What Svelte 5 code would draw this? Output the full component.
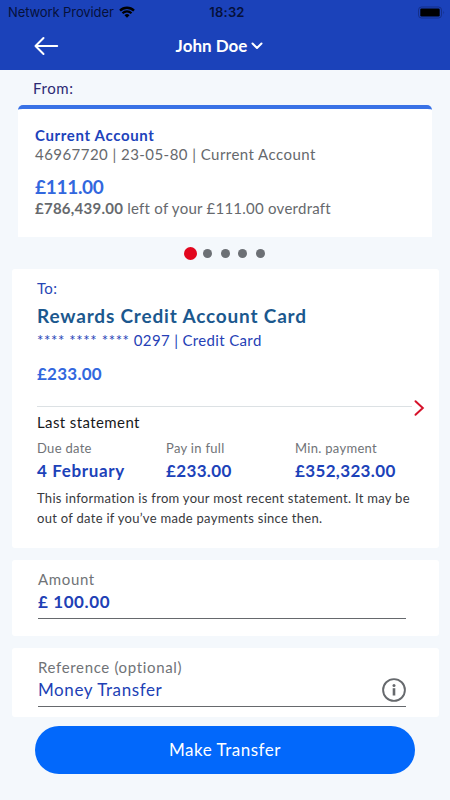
<script lang="ts">
    const profile = 'John Doe';

    const from = {
        name: 'Current Account',
        details: '46967720 | 23-05-80 | Current Account',
        balance: '£111.00',
        available: '£786,439.00',
        overdraft: '£111.00'
    };

    const to = {
        name: 'Rewards Credit Account Card',
        mask: '**** **** ****',
        number: '0297',
        type: 'Credit Card',
        balance: '£233.00'
    };

    const statement = [
        { label: 'Due date', value: '4 February' },
        { label: 'Pay in full', value: '£233.00' },
        { label: 'Min. payment', value: '£352,323.00' }
    ];

    const accounts = 5;
    let selected = $state(0);
    let reference = $state('Money Transfer');
    let amount = $state('£ 100.00');
</script>

<div class="screen">
    <header>
        <div class="status">
            <div class="provider">
                <span>Network Provider</span>
                <svg width="16" height="12" viewBox="0 0 16 12" fill="none" stroke="#000" stroke-width="2.3">
                    <path d="M1 4.6a10 10 0 0 1 14 0" />
                    <path d="M3.5 7.3a6.4 6.4 0 0 1 9 0" />
                    <path d="M8 11.8 5.5 9.3a3.6 3.6 0 0 1 5 0z" fill="#000" stroke="none" />
                </svg>
            </div>
            <span class="time">18:32</span>
            <svg class="battery" width="28" height="13" viewBox="0 0 28 13">
                <rect x="0.5" y="1" width="23" height="11" rx="3" fill="none" stroke="#142f8a" />
                <rect x="2.3" y="2.5" width="19.4" height="8" rx="1.2" />
                <path d="M25.4 4.7q1.6 1.8 0 3.6z" fill="#142f8a" />
            </svg>
        </div>
        <nav>
            <button class="back" aria-label="Back">
                <svg width="26" height="20" viewBox="0 0 26 20" fill="none" stroke="#fff" stroke-width="2" stroke-linecap="round" stroke-linejoin="round">
                    <path d="M23.2 10H1.5M9.5 2 1.5 10l8 8" />
                </svg>
            </button>
            <button class="profile">
                <span>{profile}</span>
                <svg width="12" height="8" viewBox="0 0 12 8" fill="none" stroke="#fff" stroke-width="2" stroke-linecap="round" stroke-linejoin="round">
                    <path d="M1.5 1.5 6 6l4.5-4.5" />
                </svg>
            </button>
        </nav>
    </header>

    <main>
        <div class="from-label">From:</div>

        <section class="account">
            <div class="account-name">{from.name}</div>
            <div class="account-details">{from.details}</div>
            <div class="account-balance">{from.balance}</div>
            <div class="overdraft"><b>{from.available}</b> left of your {from.overdraft} overdraft</div>
        </section>

        <div class="dots">
            {#each Array(accounts) as _, i}
                <button class:active={i === selected} aria-label="Account {i + 1}" onclick={() => selected = i}></button>
            {/each}
        </div>

        <section class="panel payee">
            <div class="to-label">To:</div>
            <h2>{to.name}</h2>
            <div class="card-number"><span class="mask">{to.mask}</span> {to.number} | {to.type}</div>
            <div class="card-balance">{to.balance}</div>
            <div class="divider">
                <hr>
                <svg width="12" height="18" viewBox="0 0 12 18" fill="none" stroke="#d6122a" stroke-width="2" stroke-linecap="round">
                    <path d="M1.5 2.2 8.8 9l-7.3 6.8" />
                </svg>
            </div>
            <h3>Last statement</h3>
            <dl>
                {#each statement as item}
                    <div>
                        <dt>{item.label}</dt>
                        <dd>{item.value}</dd>
                    </div>
                {/each}
            </dl>
            <p>
                This information is from your most recent statement. It may be<br>
                out of date if you’ve made payments since then.
            </p>
        </section>

        <section class="panel amount">
            <label for="amount">Amount</label>
            <div class="field">
                <input id="amount" bind:value={amount}>
            </div>
        </section>

        <section class="panel reference">
            <label for="reference">Reference (optional)</label>
            <div class="field">
                <input id="reference" bind:value={reference}>
                <svg width="24" height="24" viewBox="0 0 24 24" fill="none" stroke="#66696d">
                    <circle cx="12" cy="12" r="10.9" stroke-width="1.9" />
                    <path d="M12 10.2v7.3" stroke-width="2.6" />
                    <circle cx="12" cy="7.5" r="1.5" fill="#66696d" stroke="none" />
                </svg>
            </div>
        </section>
    </main>

    <button class="submit">Make Transfer</button>
</div>

<style>
    :global(body) {
        background: #f4f8fc;
    }

    .screen {
        width: 450px;
        height: 800px;
        overflow: hidden;
        display: flex;
        flex-direction: column;
        background: #f4f8fc;
        font-family: Lato, "Noto Sans", sans-serif;
        white-space: nowrap;
    }

    button {
        padding: 0;
        border: none;
        background: none;
        font-family: inherit;
    }

    svg {
        display: block;
        flex: none;
    }

    header {
        height: 70px;
        flex: none;
        background: #1b42ba;
    }

    .status {
        height: 24px;
        padding: 0 4px 0 8px;
        display: grid;
        grid-template-columns: 1fr auto 1fr;
        align-items: center;
        color: #06113a;
        font-family: Inter, sans-serif;
        font-size: 13px;
    }

    .provider {
        display: flex;
        align-items: center;
        gap: 5px;
        letter-spacing: -0.1px;
    }

    .time {
        font-weight: 600;
        letter-spacing: 0.2px;
    }

    .battery {
        justify-self: end;
    }

    nav {
        height: 44px;
        padding: 0 34px;
        display: grid;
        grid-template-columns: 1fr auto 1fr;
        align-items: center;
    }

    .profile {
        display: flex;
        align-items: center;
        gap: 4px;
        padding-right: 11px;
        color: #fff;
        font-size: 17px;
        font-weight: 700;
        line-height: 24px;
    }

    main {
        height: 647px;
        flex: none;
        overflow: hidden;
    }

    .from-label {
        height: 35px;
        box-sizing: border-box;
        padding: 6px 0 0 33px;
        line-height: 25px;
        font-size: 15px;
        letter-spacing: 0.6px;
        color: #2c2a74;
    }

    .account {
        height: 132px;
        box-sizing: border-box;
        margin: 0 18px;
        padding: 16px 17px 0;
        border-top: 4px solid #3972e6;
        border-radius: 5px 5px 0 0;
        background: #fff;
        color: #66696d;
    }

    .account-name {
        line-height: 20px;
        font-size: 15px;
        font-weight: 700;
        color: #1d43bb;
        letter-spacing: 0.65px;
    }

    .account-details {
        line-height: 18px;
        font-size: 15px;
        letter-spacing: 0.45px;
    }

    .account-balance {
        margin-top: 12px;
        line-height: 24px;
        font-size: 19px;
        font-weight: 700;
        letter-spacing: -0.3px;
        color: #3267de;
    }

    .overdraft {
        line-height: 19px;
        font-size: 15px;
        letter-spacing: 0.25px;
    }

    .dots {
        height: 32px;
        padding-right: 2px;
        display: flex;
        align-items: center;
        justify-content: center;
        gap: 8.5px;
    }

    .dots button {
        width: 9px;
        height: 9px;
        border-radius: 50%;
        background: #6c7075;
    }

    .dots .active {
        width: 13px;
        height: 13px;
        margin-right: -2px;
        background: #e2061e;
    }

    .panel {
        box-sizing: border-box;
        margin: 0 11px 0 12px;
        background: #fff;
        border-radius: 3px;
    }

    .payee {
        height: 279px;
        margin-bottom: 12px;
        padding: 9px 13px 0 25px;
    }

    .to-label {
        line-height: 20px;
        font-size: 15px;
        letter-spacing: 0.3px;
        color: #2747b5;
    }

    h2 {
        margin: 4px 0 0;
        line-height: 28px;
        font-size: 19px;
        font-weight: 700;
        letter-spacing: 0.82px;
        color: #1b588e;
    }

    .card-number {
        line-height: 20px;
        font-size: 15px;
        letter-spacing: 0.35px;
        color: #263fb6;
    }

    .mask {
        letter-spacing: 0.6px;
    }

    .card-balance {
        margin-top: 14px;
        line-height: 20px;
        font-size: 17px;
        font-weight: 700;
        letter-spacing: 0.25px;
        color: #3267de;
    }

    .divider {
        height: 26px;
        margin-top: 11px;
        display: flex;
        align-items: center;
        gap: 2px;
    }

    hr {
        flex: 1;
        height: 1px;
        margin: 0 0 3px;
        border: none;
        background: #dce1e4;
    }

    h3 {
        margin: -9px 0 0;
        line-height: 20px;
        font-size: 15px;
        font-weight: 400;
        letter-spacing: 0.4px;
        color: #17191c;
    }

    dl {
        margin: 6px 0 0;
        display: grid;
        grid-template-columns: 129px 129px 1fr;
    }

    dt {
        line-height: 20px;
        font-size: 13px;
        letter-spacing: 0.3px;
        color: #707377;
    }

    dd {
        margin: 0;
        line-height: 26px;
        font-size: 17px;
        font-weight: 700;
        letter-spacing: 0.35px;
        color: #1c42b9;
    }

    dl div:first-child dd {
        letter-spacing: 0.65px;
    }

    p {
        margin: 4px 0 0;
        line-height: 20px;
        font-size: 13px;
        letter-spacing: 0.29px;
        color: #37393d;
    }

    .amount {
        height: 76px;
        margin-bottom: 12px;
        padding: 9px 33px 0 26px;
    }

    .reference {
        height: 69px;
        padding: 9px 33px 0 26px;
    }

    label {
        display: block;
        line-height: 20px;
        font-size: 15px;
        letter-spacing: 0.65px;
        color: #707377;
    }

    .field {
        height: 30px;
        box-sizing: border-box;
        padding-bottom: 3px;
        display: flex;
        align-items: center;
        border-bottom: 1.5px solid #66696d;
    }

    input {
        flex: 1;
        min-width: 0;
        height: 26px;
        padding: 0 0 2px;
        box-sizing: border-box;
        border: none;
        outline: none;
        background: none;
        font-family: inherit;
        font-size: 17px;
        letter-spacing: 0.6px;
        color: #213fb5;
    }

    .amount input {
        font-weight: 700;
    }

    .submit {
        height: 48px;
        flex: none;
        margin: 9px 35px 0;
        padding-bottom: 2px;
        border-radius: 24px;
        background: #0268fb;
        color: #fff;
        font-size: 17px;
        letter-spacing: 0.5px;
    }
</style>
